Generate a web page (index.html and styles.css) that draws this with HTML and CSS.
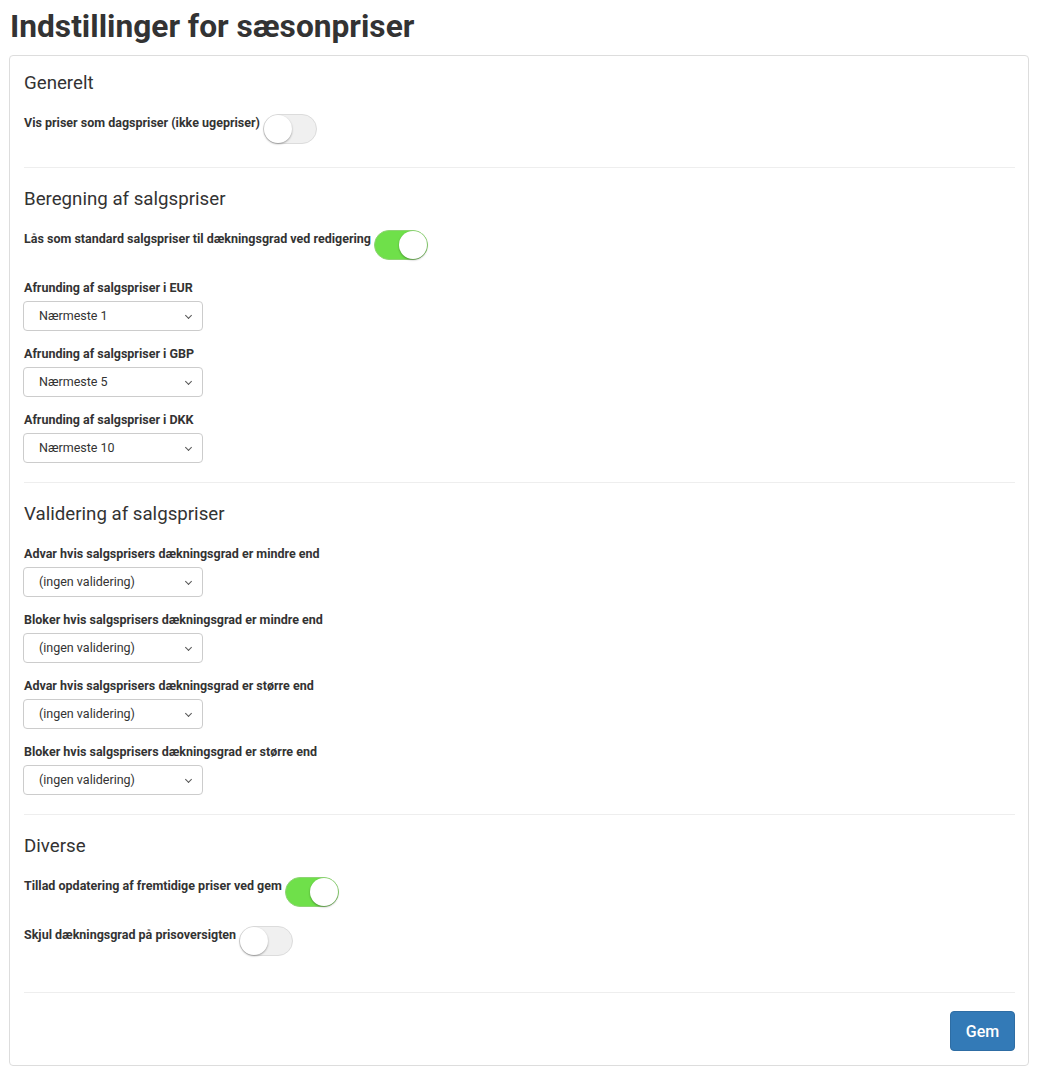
FILE: index.html
```html
<!DOCTYPE html>
<html>
<head>
  <meta charset="utf-8">
  <title>Indstillinger for sæsonpriser</title>
  <link rel="stylesheet" href="styles.css">
</head>
<body>
<h1 class="page-title">Indstillinger for sæsonpriser</h1>

<div class="panel">
  <div class="section">
    <h3>Generelt</h3>
    <div class="switch-row">
      <label>Vis priser som dagspriser (ikke ugepriser)</label>
      <span class="switch"></span>
    </div>
  </div>

  <div class="section">
    <h3>Beregning af salgspriser</h3>
    <div class="switch-row">
      <label>Lås som standard salgspriser til dækningsgrad ved redigering</label>
      <span class="switch on"></span>
    </div>
    <div class="form-group">
      <label>Afrunding af salgspriser i EUR</label>
      <div class="select">Nærmeste 1</div>
    </div>
    <div class="form-group">
      <label>Afrunding af salgspriser i GBP</label>
      <div class="select">Nærmeste 5</div>
    </div>
    <div class="form-group">
      <label>Afrunding af salgspriser i DKK</label>
      <div class="select">Nærmeste 10</div>
    </div>
  </div>

  <div class="section">
    <h3>Validering af salgspriser</h3>
    <div class="form-group">
      <label>Advar hvis salgsprisers dækningsgrad er mindre end</label>
      <div class="select">(ingen validering)</div>
    </div>
    <div class="form-group">
      <label>Bloker hvis salgsprisers dækningsgrad er mindre end</label>
      <div class="select">(ingen validering)</div>
    </div>
    <div class="form-group">
      <label>Advar hvis salgsprisers dækningsgrad er større end</label>
      <div class="select">(ingen validering)</div>
    </div>
    <div class="form-group">
      <label>Bloker hvis salgsprisers dækningsgrad er større end</label>
      <div class="select">(ingen validering)</div>
    </div>
  </div>

  <div class="section last">
    <h3>Diverse</h3>
    <div class="switch-row">
      <label>Tillad opdatering af fremtidige priser ved gem</label>
      <span class="switch on"></span>
    </div>
    <div class="switch-row">
      <label>Skjul dækningsgrad på prisoversigten</label>
      <span class="switch"></span>
    </div>
  </div>

  <div class="actions">
    <button class="btn">Gem</button>
  </div>
</div>
</body>
</html>
```

FILE: styles.css
```css
*{
  margin: 0;
  padding: 0;
  box-sizing: border-box;
}
body{
  font-family: Roboto, "Liberation Sans", Arial, sans-serif;
  color: #333;
  padding: 0 14px 0 9px;
  font-size: 12.5px;
}
.page-title{
  font-size: 31.7px;
  font-weight: 700;
  line-height: 38px;
  padding: 8px 0 9px 1px;
  color: #333;
}
.panel{
  border: 1px solid #ddd;
  border-radius: 4px;
  padding: 15px 13px 14px 14px;
}
.section{
  border-bottom: 1px solid #eee;
  padding-bottom: 5px;
  margin-bottom: 21px;
}
.section.last{
  padding-bottom: 18px;
  margin-bottom: 18px;
}
.section h3{
  font-size: 18.7px;
  font-weight: 400;
  line-height: 20px;
  margin: 2px 0 21px;
}
label{
  display: block;
  font-weight: 700;
  font-size: 12.5px;
  line-height: 17px;
  color: #333;
}
.switch-row{
  display: flex;
  align-items: flex-start;
  margin-bottom: 19px;
}
.switch-row:last-child{
  margin-bottom: 18px;
}
.switch-row label{
  margin-right: 3px;
}
.switch{
  display: inline-block;
  position: relative;
  width: 54px;
  height: 30px;
  border-radius: 15px;
  background: #f0f0f0;
  border: 1px solid #dcdcdc;
}
.switch::after{
  content: "";
  position: absolute;
  top: 0;
  left: 0;
  width: 28px;
  height: 28px;
  border-radius: 50%;
  background: #fff;
  box-shadow: 0 1px 2px rgba(0,0,0,0.35);
}
.switch.on{
  background: #6fe04a;
  border-color: #8ed474;
}
.switch.on::after{
  left: auto;
  right: 0;
}
.switch-row + .form-group{
  margin-top: 3px;
}
.form-group{
  margin-bottom: 14px;
}
.form-group label{
  margin-bottom: 5px;
}
.select{
  position: relative;
  width: 180px;
  height: 30px;
  margin-left: -1px;
  border: 1px solid #ccc;
  border-radius: 4px;
  background: #fff;
  padding-left: 15px;
  line-height: 28px;
  font-size: 12.5px;
  color: #333;
}
.select::after{
  content: "";
  position: absolute;
  right: 11px;
  top: 11px;
  width: 4px;
  height: 4px;
  border-right: 1px solid #555;
  border-bottom: 1px solid #555;
  transform: rotate(45deg);
}
.actions{
  display: flex;
  justify-content: flex-end;
}
.btn{
  width: 65px;
  height: 40px;
  border: 1px solid #2e6da4;
  border-radius: 4px;
  background: #337ab7;
  color: #fff;
  font-family: Roboto, "Liberation Sans", Arial, sans-serif;
  font-size: 16px;
  font-weight: 500;
}
```
